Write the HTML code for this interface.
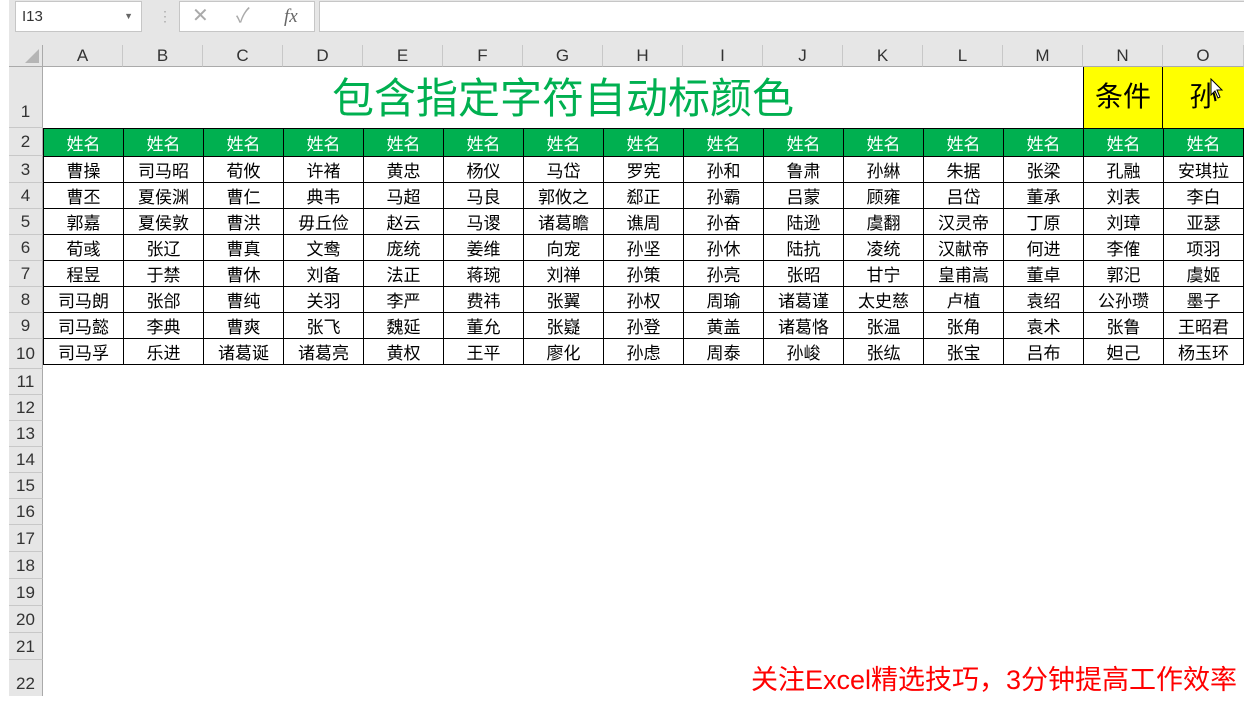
<!DOCTYPE html><html><head><meta charset="utf-8"><style>
*{margin:0;padding:0;box-sizing:border-box}
body{width:1244px;height:696px;background:#fff;position:relative;overflow:hidden;font-family:"Liberation Sans","Noto Sans CJK SC",sans-serif}
.top{position:absolute;left:9px;top:0;width:1235px;height:45px;background:#e6e6e6}
.box{position:absolute;background:#fff;border:1px solid #c6c6c6}
.ch{position:absolute;top:45px;height:22px;background:#e6e6e6;border-right:1px solid #c8c8c8;border-bottom:1px solid #aaa;text-align:center;font-size:17px;line-height:22px;color:#333}
.rh{position:absolute;left:9px;width:34px;background:#e6e6e6;border-bottom:1px solid #c8c8c8;border-right:1px solid #aaa;text-align:center;font-size:17px;color:#333}
table{position:absolute;left:43px;top:67px;border-collapse:collapse;table-layout:fixed}
td{width:80px;text-align:center;font-size:17px;padding:0;color:#000}
.g td{background:#00b050;color:#fff;border:1px solid #000;height:28px}
.d td{border:1px solid #000;height:26px}
</style></head><body>
<div class="top"></div>
<div class="box" style="left:15px;top:1px;width:127px;height:31px;font-size:15px;line-height:29px;padding-left:6px;color:#333">I13<span style="position:absolute;right:8px;top:0;font-size:9px;color:#666">▼</span></div>
<div style="position:absolute;left:158px;top:8px;color:#aaa;font-size:14px">⋮</div>
<div class="box" style="left:179px;top:1px;width:136px;height:31px;color:#aaa;font-size:20px;line-height:29px"><span style="position:absolute;left:12px">✕</span><span style="position:absolute;left:56px">✓</span><span style="position:absolute;left:104px;font-family:'Liberation Serif';font-style:italic;color:#666;font-size:19px">fx</span></div>
<div class="box" style="left:319px;top:1px;width:930px;height:31px"></div>
<div style="position:absolute;left:9px;top:45px;width:34px;height:22px;background:#e6e6e6;border-right:1px solid #aaa;border-bottom:1px solid #aaa"><div style="position:absolute;right:3px;bottom:3px;width:0;height:0;border-left:14px solid transparent;border-bottom:14px solid #b5b5b5"></div></div>
<div class="ch" style="left:43px;width:80px">A</div><div class="ch" style="left:123px;width:80px">B</div><div class="ch" style="left:203px;width:80px">C</div><div class="ch" style="left:283px;width:80px">D</div><div class="ch" style="left:363px;width:80px">E</div><div class="ch" style="left:443px;width:80px">F</div><div class="ch" style="left:523px;width:80px">G</div><div class="ch" style="left:603px;width:80px">H</div><div class="ch" style="left:683px;width:80px">I</div><div class="ch" style="left:763px;width:80px">J</div><div class="ch" style="left:843px;width:80px">K</div><div class="ch" style="left:923px;width:80px">L</div><div class="ch" style="left:1003px;width:80px">M</div><div class="ch" style="left:1083px;width:80px">N</div><div class="ch" style="left:1163px;width:81px">O</div>
<div class="rh" style="top:67px;height:61px;line-height:90px">1</div>
<div class="rh" style="top:128px;height:28px;line-height:28px">2</div>
<div class="rh" style="top:156px;height:27px;line-height:27px">3</div>
<div class="rh" style="top:183px;height:26px;line-height:26px">4</div>
<div class="rh" style="top:209px;height:26px;line-height:26px">5</div>
<div class="rh" style="top:235px;height:26px;line-height:26px">6</div>
<div class="rh" style="top:261px;height:26px;line-height:26px">7</div>
<div class="rh" style="top:287px;height:26px;line-height:26px">8</div>
<div class="rh" style="top:313px;height:26px;line-height:26px">9</div>
<div class="rh" style="top:339px;height:30px;line-height:30px">10</div>
<div class="rh" style="top:369px;height:26px;line-height:26px">11</div>
<div class="rh" style="top:395px;height:26px;line-height:26px">12</div>
<div class="rh" style="top:421px;height:26px;line-height:26px">13</div>
<div class="rh" style="top:447px;height:26px;line-height:26px">14</div>
<div class="rh" style="top:473px;height:26px;line-height:26px">15</div>
<div class="rh" style="top:499px;height:26px;line-height:26px">16</div>
<div class="rh" style="top:525px;height:27px;line-height:27px">17</div>
<div class="rh" style="top:552px;height:27px;line-height:27px">18</div>
<div class="rh" style="top:579px;height:27px;line-height:27px">19</div>
<div class="rh" style="top:606px;height:27px;line-height:27px">20</div>
<div class="rh" style="top:633px;height:27px;line-height:27px">21</div>
<div class="rh" style="top:660px;height:36px;line-height:48px;border-bottom:none">22</div>
<div style="position:absolute;left:43px;top:67px;width:1040px;height:61px;text-align:center;color:#00b050;font-size:42px;line-height:58px;font-family:'Noto Sans CJK SC',sans-serif">包含指定字符自动标颜色</div>
<div style="position:absolute;left:1083px;top:67px;width:80px;height:61px;background:#ff0;border-left:1px solid #000;border-right:1px solid #000;text-align:center;font-size:28px;line-height:60px">条件</div>
<div style="position:absolute;left:1163px;top:67px;width:81px;height:61px;background:#ff0;text-align:center;font-size:28px;line-height:60px">孙</div>
<svg style="position:absolute;left:1210px;top:78px" width="14" height="22" viewBox="0 0 14 22"><path d="M1 1 L1 17 L5 13 L8 20 L10 19 L7 12 L12 12 Z" fill="#fff" stroke="#000" stroke-width="1"/></svg>
<table style="top:128px">
<tr class="g"><td>姓名</td><td>姓名</td><td>姓名</td><td>姓名</td><td>姓名</td><td>姓名</td><td>姓名</td><td>姓名</td><td>姓名</td><td>姓名</td><td>姓名</td><td>姓名</td><td>姓名</td><td>姓名</td><td>姓名</td></tr>
<tr class="d"><td>曹操</td><td>司马昭</td><td>荀攸</td><td>许褚</td><td>黄忠</td><td>杨仪</td><td>马岱</td><td>罗宪</td><td>孙和</td><td>鲁肃</td><td>孙綝</td><td>朱据</td><td>张梁</td><td>孔融</td><td>安琪拉</td></tr>
<tr class="d"><td>曹丕</td><td>夏侯渊</td><td>曹仁</td><td>典韦</td><td>马超</td><td>马良</td><td>郭攸之</td><td>郄正</td><td>孙霸</td><td>吕蒙</td><td>顾雍</td><td>吕岱</td><td>董承</td><td>刘表</td><td>李白</td></tr>
<tr class="d"><td>郭嘉</td><td>夏侯敦</td><td>曹洪</td><td>毋丘俭</td><td>赵云</td><td>马谡</td><td>诸葛瞻</td><td>谯周</td><td>孙奋</td><td>陆逊</td><td>虞翻</td><td>汉灵帝</td><td>丁原</td><td>刘璋</td><td>亚瑟</td></tr>
<tr class="d"><td>荀彧</td><td>张辽</td><td>曹真</td><td>文鸯</td><td>庞统</td><td>姜维</td><td>向宠</td><td>孙坚</td><td>孙休</td><td>陆抗</td><td>凌统</td><td>汉献帝</td><td>何进</td><td>李傕</td><td>项羽</td></tr>
<tr class="d"><td>程昱</td><td>于禁</td><td>曹休</td><td>刘备</td><td>法正</td><td>蒋琬</td><td>刘禅</td><td>孙策</td><td>孙亮</td><td>张昭</td><td>甘宁</td><td>皇甫嵩</td><td>董卓</td><td>郭汜</td><td>虞姬</td></tr>
<tr class="d"><td>司马朗</td><td>张郃</td><td>曹纯</td><td>关羽</td><td>李严</td><td>费祎</td><td>张翼</td><td>孙权</td><td>周瑜</td><td>诸葛谨</td><td>太史慈</td><td>卢植</td><td>袁绍</td><td>公孙瓒</td><td>墨子</td></tr>
<tr class="d"><td>司马懿</td><td>李典</td><td>曹爽</td><td>张飞</td><td>魏延</td><td>董允</td><td>张嶷</td><td>孙登</td><td>黄盖</td><td>诸葛恪</td><td>张温</td><td>张角</td><td>袁术</td><td>张鲁</td><td>王昭君</td></tr>
<tr class="d"><td>司马孚</td><td>乐进</td><td>诸葛诞</td><td>诸葛亮</td><td>黄权</td><td>王平</td><td>廖化</td><td>孙虑</td><td>周泰</td><td>孙峻</td><td>张纮</td><td>张宝</td><td>吕布</td><td>妲己</td><td>杨玉环</td></tr>
</table>
<div style="position:absolute;right:7px;top:664px;color:#f00;font-size:27px;line-height:32px;white-space:nowrap">关注Excel精选技巧，3分钟提高工作效率</div>
</body></html>
